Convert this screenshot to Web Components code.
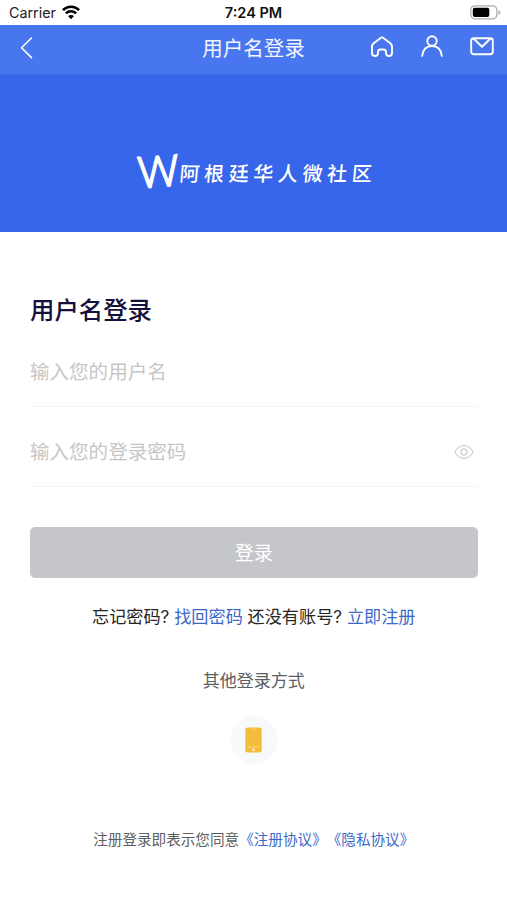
<!DOCTYPE html>
<html lang="zh-CN">
<head>
<meta charset="utf-8">
<title>用户名登录</title>
<style>
html,body{margin:0;padding:0;background:#fff}
body{font-family:Inter,"Noto Sans CJK SC",sans-serif;text-spacing-trim:space-all}
</style>
</head>
<body>
<login-page></login-page>
<script>
function define(name, html) {
  const t = document.createElement('template');
  t.innerHTML = html;
  customElements.define(name, class extends HTMLElement {
    constructor() {
      super();
      this.attachShadow({mode: 'open'}).appendChild(t.content.cloneNode(true));
    }
  });
}

define('status-bar', `
<style>
:host{display:grid;grid-template-columns:1fr auto 1fr;align-items:center;height:25px;padding:0 6px 0 9px;box-sizing:border-box;font-size:14.300px;line-height:25px;color:#222;background:#fff}
.l{display:flex;align-items:center;gap:6px}
.l svg{margin-top:-1px}
.t{font-weight:600;font-size:14.500px;color:#111;margin-left:-3px}
.r{justify-self:end;display:flex;padding-top:0}
svg{display:block}
</style>
<div class="l"><span>Carrier</span><svg width="18" height="15" viewBox="0 0 18 15" fill="none" stroke="#000" stroke-width="2.6"><path d="M.9 5.2C5.3.6 12.7.6 17.1 5.2"/><path d="M3.9 8.3c2.8-2.8 7.4-2.8 10.2 0"/><path d="M9 14.2 6 11.1q3-2.4 6 0z" fill="#000" stroke="none"/></svg></div>
<span class="t">7:24 PM</span>
<div class="r"><svg width="31" height="15" viewBox="0 0 31 15"><rect x=".8" y=".8" width="26" height="13" rx="4" fill="none" stroke="#aaa" stroke-width="1.2"/><rect x="2.8" y="2.7" width="16.5" height="9.2" rx="2" fill="#000"/><path d="M28.5 5v5q2-1 2-2.5t-2-2.5z" fill="#aaa"/></svg></div>`);

define('nav-bar', `
<style>
:host{display:grid;grid-template-columns:1fr auto 1fr;align-items:center;height:50px;box-sizing:border-box;padding:0 13px 5px 19px;background:#4876ee;color:#f3f6ff;border-bottom:1px solid #426fe9}
svg{display:block;fill:none;stroke:#fff;stroke-width:1.9;stroke-linecap:round;stroke-linejoin:round}
.t{font-size:20.500px;line-height:30px;font-weight:400;margin-left:-6px;padding-top:3px}
.r{justify-self:end;display:flex;align-items:center;gap:26px}
</style>
<svg width="16" height="24" viewBox="0 0 16 24"><path d="M12.5 3 2.5 12.8l10 9.8" stroke-width="1.6"/></svg>
<span class="t">用户名登录</span>
<div class="r">
<svg width="24" height="24" viewBox="0 0 24 24"><path d="M12 2.400q.8 0 2 1l6.300 4.800Q22 9.500 22 11.500v6.500q0 3-3 3-3 0-3-3v-1q0-2.500-2.500-2.500h-3Q8 14.500 8 17v1q0 3-3 3-3 0-3-3v-6.500q0-2 1.700-3.300L10 3.400q1.200-1 2-1z"/></svg>
<svg width="24" height="24" viewBox="0 0 24 24"><circle cx="12" cy="6" r="4.700"/><path d="M2.200 20.800C3 14 7 11 12 11s9 3 9.800 9.800"/></svg>
<svg width="24" height="24" viewBox="0 0 24 24"><rect x="1.200" y="3.200" width="21.600" height="16" rx="2.500"/><path d="m4 4 8 7.800L20 4"/></svg>
</div>`);

define('brand-banner', `
<style>
:host{display:flex;height:157px;box-sizing:border-box;padding:75px 0 0 138px;background:#3866eb;color:#fff;align-items:flex-start}
.w{display:block;width:42px;height:44px;font:300 43px/44px Lato,sans-serif;transform:rotate(-4deg) scaleX(.93);transform-origin:0 50%;-webkit-text-stroke:2px #fff;stroke-linejoin:round}
.n{font:500 20px/30px "Noto Sans CJK SC",sans-serif;letter-spacing:4.600px;padding-top:8px;white-space:nowrap;transform:skewX(-5deg)}
</style>
<span class="w">W</span><span class="n">阿根廷华人微社区</span>`);

define('text-field', `
<style>
:host{display:flex;align-items:center;justify-content:space-between;height:80px;box-sizing:border-box;border-bottom:1.500px solid #f3f3f4;padding:11px 4px 0 0;font-size:19.550px;line-height:30px;font-weight:400;color:#c6c6c6}
</style>
<span><slot></slot></span><slot name="icon"></slot>`);

define('eye-icon', `
<style>:host{display:block}svg{display:block}</style>
<svg width="20" height="16" viewBox="0 0 20 16" fill="none" stroke="#d2d2d2" stroke-width="1.300"><path d="M.8 8Q4.500 1.700 10 1.700T19.200 8Q15.500 14.300 10 14.300T.8 8z"/><circle cx="10" cy="8" r="3"/></svg>`);

define('submit-button', `
<style>
:host{display:flex;align-items:center;justify-content:center;height:51px;border-radius:5px;background:#c4c6c9;color:#fff;font-size:19px;line-height:28px;box-sizing:border-box;padding-top:2px}
</style><slot></slot>`);

define('text-link', `<style>:host{display:inline;color:#3d68c9}</style><slot></slot>`);

define('phone-login', `
<style>
:host{display:flex;width:48px;height:48px;border-radius:50%;background:#f7f9fb;align-items:center;justify-content:center}
svg{display:block}
</style>
<svg width="17" height="26" viewBox="0 0 17 26"><rect x=".3" y=".5" width="16.400" height="25" rx="2.500" fill="#f3bd3b"/><path d="M6.500 2.200h4M2.500 20h12" stroke="#f9d780" stroke-width="1"/><circle cx="8.500" cy="22.700" r="1.300" fill="#fff5d8"/></svg>`);

define('login-page', `
<style>
:host{display:flex;flex-direction:column;width:507px;height:900px;background:#fff;overflow:hidden}
main{display:flex;flex-direction:column;padding:61px 29.500px 0 30px}
h1{margin:0;font-size:24.400px;line-height:35px;height:34px;font-weight:500;color:#15113a}
submit-button{margin-top:40px}
.help{margin-top:24px;height:30px;line-height:30px;font-size:17.150px;text-align:center;color:#252525;white-space:nowrap}
.other{margin-top:34px;height:30px;line-height:30px;font-size:17px;text-align:center;color:#5b5e62}
phone-login{align-self:center;margin-top:20px}
.terms{margin-top:63px;height:26px;line-height:26px;font-size:14.600px;text-align:center;color:#5e5e5e;white-space:nowrap}
</style>
<status-bar></status-bar>
<nav-bar></nav-bar>
<brand-banner></brand-banner>
<main>
<h1>用户名登录</h1>
<text-field>输入您的用户名</text-field>
<text-field>输入您的登录密码<eye-icon slot="icon"></eye-icon></text-field>
<submit-button>登录</submit-button>
<div class="help">忘记密码? <text-link>找回密码</text-link> 还没有账号? <text-link>立即注册</text-link></div>
<div class="other">其他登录方式</div>
<phone-login></phone-login>
<div class="terms">注册登录即表示您同意<text-link>《注册协议》《隐私协议》</text-link></div>
</main>`);
</script>
</body>
</html>
